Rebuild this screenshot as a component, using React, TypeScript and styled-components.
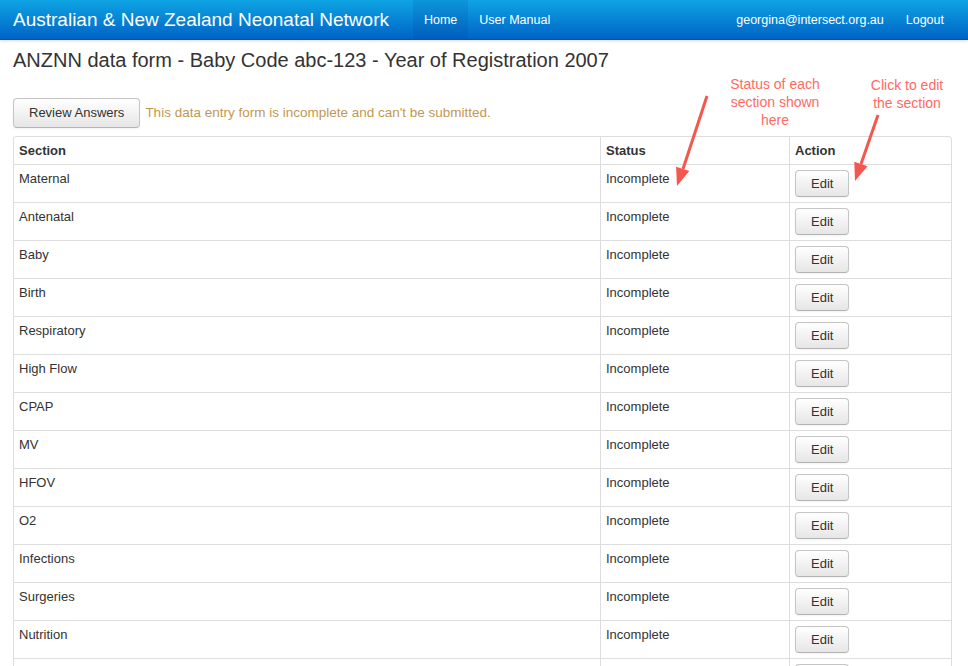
import styled, { createGlobalStyle } from 'styled-components';

const GlobalStyle = createGlobalStyle`
  body {
    margin: 0;
    font-family: "Liberation Sans", Arial, Helvetica, sans-serif;
    font-size: 14px;
    line-height: 18px;
    color: #333;
    background: #fff;
  }
`;

const sections = [
  'Maternal', 'Antenatal', 'Baby', 'Birth', 'Respiratory', 'High Flow', 'CPAP',
  'MV', 'HFOV', 'O2', 'Infections', 'Surgeries', 'Nutrition', 'Discharge',
];

const Page = () => (
  <Wrapper>
    <GlobalStyle />
    <Navbar>
      <Brand>Australian &amp; New Zealand Neonatal Network</Brand>
      <NavList>
        <NavItem $active>Home</NavItem>
        <NavItem>User Manual</NavItem>
      </NavList>
      <NavList $right>
        <NavItem>georgina@intersect.org.au</NavItem>
        <NavItem>Logout</NavItem>
      </NavList>
    </Navbar>

    <Content>
      <Heading>ANZNN data form - Baby Code abc-123 - Year of Registration 2007</Heading>
      <Toolbar>
        <Button>Review Answers</Button>
        <Warning>This data entry form is incomplete and can't be submitted.</Warning>
      </Toolbar>

      <Table>
        <colgroup>
          <col style={{ width: 587 }} />
          <col style={{ width: 189 }} />
          <col />
        </colgroup>
        <thead>
          <tr>
            <Th>Section</Th>
            <Th>Status</Th>
            <Th>Action</Th>
          </tr>
        </thead>
        <tbody>
          {sections.map(name => (
            <tr key={name}>
              <Td>{name}</Td>
              <Td>Incomplete</Td>
              <Td><SmallButton>Edit</SmallButton></Td>
            </tr>
          ))}
        </tbody>
      </Table>
    </Content>

    <Note style={{ left: 705, top: 75 }}>Status of each<br />section shown<br />here</Note>
    <Note style={{ left: 837, top: 76 }}>Click to edit<br />the section</Note>

    <Arrows width="968" height="220" viewBox="0 0 968 220">
      <line x1="707" y1="96" x2="683" y2="169" />
      <polygon points="677,186 689.3,171.1 676.1,166.7" />
      <line x1="878" y1="115" x2="861" y2="164" />
      <polygon points="855,181 867.5,166.3 854.3,161.7" />
    </Arrows>
  </Wrapper>
);

const Wrapper = styled.div`
  position: relative;
`;

const Navbar = styled.nav`
  display: flex;
  align-items: center;
  height: 39px;
  padding: 0 13px;
  background: linear-gradient(#0ea4e3, #0063c6);
  border-bottom: 1px solid #0056b0;
  box-shadow: 0 1px 3px rgba(0, 0, 0, 0.15);
`;

const Brand = styled.div`
  font-size: 19px;
  color: #fff;
  margin-right: 24px;
  line-height: 39px;
`;

const NavList = styled.div<{ $right?: boolean }>`
  display: flex;
  height: 100%;
  margin-left: ${p => (p.$right ? 'auto' : '0')};
  margin-right: ${p => (p.$right ? '0' : '0')};
`;

const NavItem = styled.div<{ $active?: boolean }>`
  display: flex;
  align-items: center;
  padding: 0 11px;
  font-size: 12.5px;
  color: #fff;
  background: ${p => (p.$active ? 'rgba(0, 40, 120, 0.1)' : 'transparent')};
`;

const Content = styled.main`
  padding: 0 16px 40px 13px;
`;

const Heading = styled.h1`
  margin: 8px 0 26px;
  font-size: 20px;
  font-weight: normal;
  line-height: 24px;
  color: #333;
`;

const Toolbar = styled.div`
  display: flex;
  align-items: center;
  gap: 5px;
  margin-bottom: 8px;
`;

const Button = styled.button`
  font-family: inherit;
  font-size: 13px;
  line-height: 18px;
  padding: 5px 15px;
  color: #333;
  background: linear-gradient(#ffffff, #e6e6e6);
  border: 1px solid #c5c5c5;
  border-bottom-color: #b3b3b3;
  border-radius: 4px;
  box-shadow: inset 0 1px 0 rgba(255, 255, 255, 0.2), 0 1px 2px rgba(0, 0, 0, 0.05);
`;

const SmallButton = styled(Button)`
  padding: 4px 15px;
  line-height: 17px;
  display: block;
`;

const Warning = styled.span`
  color: #c09853;
  font-size: 13.5px;
`;

const Table = styled.table`
  width: 939px;
  table-layout: fixed;
  border-collapse: separate;
  border-spacing: 0;
  border: 1px solid #dddddd;
  border-left: 0;
  border-radius: 4px;
`;

const Th = styled.th`
  text-align: left;
  font-weight: bold;
  font-size: 13px;
  padding: 5px 5px;
  line-height: 17px;
  border-left: 1px solid #dddddd;
`;

const Td = styled.td`
  vertical-align: top;
  font-size: 13px;
  padding: 5px 5px;
  line-height: 17px;
  height: 27px;
  border-left: 1px solid #dddddd;
  border-top: 1px solid #dddddd;
`;

const Note = styled.div`
  position: absolute;
  width: 140px;
  text-align: center;
  font-size: 14px;
  line-height: 18px;
  color: #ff6a63;
`;

const Arrows = styled.svg`
  position: absolute;
  left: 0;
  top: 0;
  pointer-events: none;
  line {
    stroke: #f4574e;
    stroke-width: 3;
  }
  polygon {
    fill: #f4574e;
  }
`;

export default Page;
